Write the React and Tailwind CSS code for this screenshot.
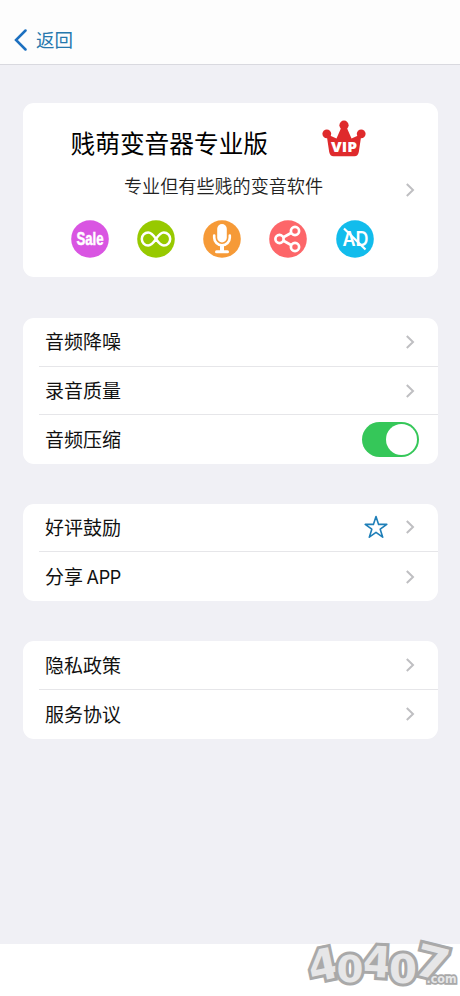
const ROW_FONT = "font-['Inter','Noto_Sans_CJK_SC',sans-serif]";

function Chevron() {
  return (
    <svg width="10" height="16" viewBox="0 0 10 16" fill="none" className="shrink-0">
      <path d="M1.8 2 L8 8 L1.8 14" stroke="#bfbfc2" strokeWidth="2" />
    </svg>
  );
}

function Row({ label, last, children }) {
  return (
    <div className="flex h-[48.7px] pl-4">
      <div
        className={`flex flex-1 items-center justify-between pl-[6.5px] ${
          last ? "" : "border-b border-[#e6e6e9]"
        }`}
      >
        <span className="pt-[3px] text-[19px] leading-6 text-[#111]">{label}</span>
        {children}
      </div>
    </div>
  );
}

function LinkRow({ label, last, icon }) {
  return (
    <Row label={label} last={last}>
      <div className="flex items-center gap-4 pr-[23px]">
        {icon}
        <Chevron />
      </div>
    </Row>
  );
}

function Group({ children, className = "" }) {
  return <section className={`rounded-[11px] bg-white ${className}`}>{children}</section>;
}

function Crown() {
  return (
    <svg width="44" height="38" viewBox="0 0 44 38" className="-ml-px shrink-0">
      <g fill="#df2a2c">
        <circle cx="22" cy="5.2" r="4.6" />
        <circle cx="4.8" cy="13.8" r="4.4" />
        <circle cx="39.2" cy="13.8" r="4.4" />
        <path d="M4.5 14 L14.5 18.5 L19.5 7 H24.5 L29.5 18.5 L39.5 14 L36.8 32 Q36 36.2 32.5 36.2 H11.5 Q8 36.2 7.2 32 Z" />
      </g>
      <text
        x="22"
        y="32"
        textAnchor="middle"
        textLength="26"
        lengthAdjust="spacingAndGlyphs"
        fill="#fff"
        className="font-['Open_Sans',sans-serif] text-[14.5px] font-extrabold"
      >
        VIP
      </text>
    </svg>
  );
}

function Star() {
  return (
    <svg width="26" height="26" viewBox="0 0 26 26" fill="none">
      <path
        d="M13 2.6 L15.6 10.4 H23.8 L17.2 15.2 L19.7 23.2 L13 18.4 L6.3 23.2 L8.8 15.2 L2.2 10.4 H10.4 Z"
        stroke="#1f7fb8"
        strokeWidth="1.6"
        strokeLinejoin="round"
      />
    </svg>
  );
}

function Badge({ color, children }) {
  return (
    <svg width="38" height="38" viewBox="0 0 38 38" fill="none" className="overflow-visible">
      <circle cx="19" cy="19" r="18.8" fill={color} />
      {children}
    </svg>
  );
}

function Badges() {
  return (
    <div className="flex justify-between">
      <Badge color="#d955e2">
        <text
          x="19"
          y="25"
          textAnchor="middle"
          textLength="27"
          lengthAdjust="spacingAndGlyphs"
          fill="#fff"
          stroke="#fff"
          strokeWidth="0.5"
          className="font-['Liberation_Sans',sans-serif] text-[17.5px] leading-none font-bold"
        >
          Sale
        </text>
      </Badge>
      <Badge color="#97c900">
        <path
          d="M19 19 C16 14.6 14 12.6 11.2 12.6 A6.4 6.4 0 0 0 11.2 25.4 C14 25.4 16 23.4 19 19 C22 14.6 24 12.6 26.8 12.6 A6.4 6.4 0 0 1 26.8 25.4 C24 25.4 22 23.4 19 19 Z"
          stroke="#fff"
          strokeWidth="2.5"
        />
      </Badge>
      <Badge color="#f69a37">
        <rect x="14.2" y="4" width="9.6" height="18.5" rx="4.8" fill="#fff" />
        <path
          d="M11.2 15.5 V17.5 A7.8 7.8 0 0 0 26.8 17.5 V15.5"
          stroke="#fff"
          strokeWidth="2.6"
          strokeLinecap="round"
        />
        <path d="M19 25.5 V31" stroke="#fff" strokeWidth="4" />
        <path d="M13.5 31.7 H24.5" stroke="#fff" strokeWidth="3" strokeLinecap="round" />
      </Badge>
      <Badge color="#fd6669">
        <path d="M14 17.5 L22 13 M14 20.5 L22 25" stroke="#fff" strokeWidth="2.6" />
        <g stroke="#fff" strokeWidth="2.7">
          <circle cx="10.5" cy="19" r="4.1" />
          <circle cx="26" cy="11" r="4.1" />
          <circle cx="26" cy="27" r="4.1" />
        </g>
      </Badge>
      <Badge color="#12bcec">
        <text
          x="19.5"
          y="26.3"
          textAnchor="middle"
          textLength="26"
          lengthAdjust="spacingAndGlyphs"
          fill="#fff"
          className="font-['Inter',sans-serif] text-[20px] leading-none font-semibold"
        >
          AD
        </text>
        <path d="M8 8.5 L29.5 29.5" stroke="#fff" strokeWidth="2.2" />
      </Badge>
    </div>
  );
}

// the zeros come last so they sit over the fours
const MARKS = [
  { char: "4", x: 21, y: 40, size: 43, width: 30, turn: -12 },
  { char: "4", x: 75, y: 37, size: 43, width: 30, turn: 3 },
  { char: "7", x: 130, y: 38, size: 44, width: 34, turn: 14 },
  { char: "0", x: 48, y: 42, size: 38, width: 27, turn: 0 },
  { char: "0", x: 101, y: 43, size: 39, width: 28, turn: 0 },
];

function Watermark() {
  return (
    <svg
      width="158"
      height="56"
      viewBox="0 0 158 56"
      className="absolute right-0 bottom-0 overflow-visible font-['DejaVu_Sans',sans-serif] leading-none font-bold"
    >
      <g
        fill="#e6e6e7"
        stroke="#a9a9a9"
        strokeWidth="6"
        paintOrder="stroke"
        textAnchor="middle"
      >
        {MARKS.map((m) => (
          <text
            key={m.x}
            x={m.x}
            y={m.y}
            fontSize={m.size}
            textLength={m.width}
            lengthAdjust="spacingAndGlyphs"
            transform={`rotate(${m.turn} ${m.x} ${m.y - 15})`}
          >
            {m.char}
          </text>
        ))}
        <text x="139.5" y="43" fontSize="12" strokeWidth="3.5" textLength="30" lengthAdjust="spacingAndGlyphs">
          .com
        </text>
      </g>
    </svg>
  );
}

export default function App() {
  return (
    <div className={`relative flex h-[996px] w-[460px] flex-col overflow-hidden bg-white ${ROW_FONT}`}>
      <header className="flex h-[65px] shrink-0 items-end border-b border-[#d9d9df] bg-[#fdfdfd] pb-3 pl-3.5">
        <button className="flex items-center gap-[9px] text-[18.5px] leading-6 text-[#2678ad]">
          <svg width="13" height="22" viewBox="0 0 13 22" fill="none">
            <path d="M11.5 1.5 L2 11 L11.5 20.5" stroke="#1c70c0" strokeWidth="2.5" strokeLinecap="round" />
          </svg>
          返回
        </button>
      </header>

      <main className="flex h-[879px] shrink-0 flex-col bg-[#f0f0f5] px-[22.5px] pt-[38px]">
        <Group className="flex h-[174px] items-center pr-[23px]">
          <div className="flex h-full flex-1 flex-col pr-[31px] pl-12">
            <div className="flex pt-[17px]">
              <h1 className="w-[252px] pt-[6px] text-[24.7px] leading-9 text-black">贱萌变音器专业版</h1>
              <Crown />
            </div>
            <p className="pt-[12px] pl-[53.5px] text-[18.1px] leading-6 font-[350] whitespace-nowrap text-[#222]">
              专业但有些贱的变音软件
            </p>
            <div className="pt-[22px]">
              <Badges />
            </div>
          </div>
          <Chevron />
        </Group>

        <Group className="mt-[41px]">
          <LinkRow label="音频降噪" />
          <LinkRow label="录音质量" />
          <Row label="音频压缩" last>
            <div className="mr-[18.5px] flex h-[35px] w-[57px] justify-end rounded-full bg-[#35c759] p-0.5">
              <div className="size-[31px] rounded-full bg-white" />
            </div>
          </Row>
        </Group>

        <Group className="mt-[39.5px]">
          <LinkRow label="好评鼓励" icon={<Star />} />
          <LinkRow
            label={
              <>
                分享<span className="ml-[3.5px] text-[18px] tracking-[-0.3px]">APP</span>
              </>
            }
            last
          />
        </Group>

        <Group className="mt-[40.5px]">
          <LinkRow label="隐私政策" />
          <LinkRow label="服务协议" last />
        </Group>
      </main>
      <Watermark />
    </div>
  );
}
